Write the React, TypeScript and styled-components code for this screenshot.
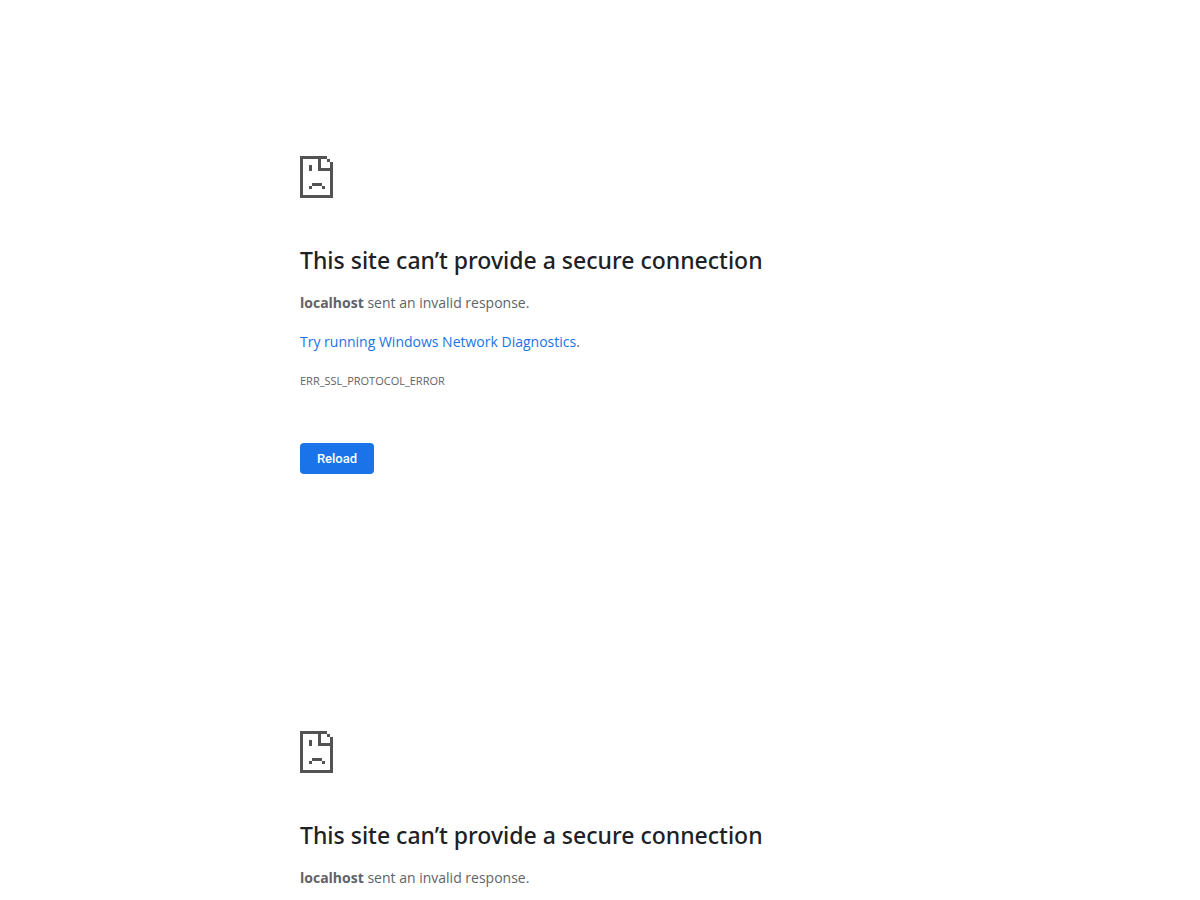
import React from "react";
import styled, { createGlobalStyle } from "styled-components";

const GlobalStyle = createGlobalStyle`
  body {
    margin: 0;
    background: #fff;
    color: #5f6368;
    font-family: "Segoe UI", "Open Sans", "Noto Sans", sans-serif;
    font-size: 14px;
    line-height: 24px;
  }
`;

const Frame = styled.section`
  box-sizing: border-box;
  max-width: 600px;
  margin: 0 auto;
  padding: 156px 0 101px;
`;

const SadPage = styled.svg`
  display: block;
  width: 33px;
  height: 42px;
  margin-bottom: 47px;
  fill: #535353;
`;

const Title = styled.h1`
  margin: 0 0 16px;
  color: #202124;
  font-family: "Segoe UI", "Noto Sans", "Open Sans", sans-serif;
  font-size: 23px;
  font-weight: 500;
  line-height: 30px;
`;

const Message = styled.p`
  margin: 0 0 15px;
`;

const DiagnosticsLink = styled.a`
  color: #1a73e8;
  text-decoration: none;
`;

const ErrorCode = styled.div`
  margin-bottom: 50px;
  font-size: 11px;
`;

const ReloadButton = styled.button`
  display: block;
  min-width: 74px;
  padding: 0 16px;
  border: 0;
  border-radius: 4px;
  background: #1a73e8;
  color: #fff;
  font-family: Roboto, "Liberation Sans", sans-serif;
  font-size: 13px;
  font-weight: 500;
  line-height: 31px;
  cursor: pointer;
`;

function ConnectionError() {
  return (
    <Frame>
      <SadPage viewBox="0 0 33 42" shapeRendering="crispEdges" aria-hidden="true">
        <path d="M0 0H27V3H21V12H30V6H33V42H0ZM3 3V39H30V15H18V3Z" fillRule="evenodd" />
        <path d="M27 3h3v3h-3zM9 9h3v6h-3zM12 27h10v3h-10zM9 30h3v3h-3zM22 30h3v3h-3z" />
      </SadPage>
      <Title>This site can’t provide a secure connection</Title>
      <Message>
        <strong>localhost</strong> sent an invalid response.
      </Message>
      <Message>
        <DiagnosticsLink href="#diagnostics">Try running Windows Network Diagnostics</DiagnosticsLink>.
      </Message>
      <ErrorCode>ERR_SSL_PROTOCOL_ERROR</ErrorCode>
      <ReloadButton type="button">Reload</ReloadButton>
    </Frame>
  );
}

export default function App() {
  return (
    <>
      <GlobalStyle />
      <main>
        <ConnectionError />
        <ConnectionError />
      </main>
    </>
  );
}
